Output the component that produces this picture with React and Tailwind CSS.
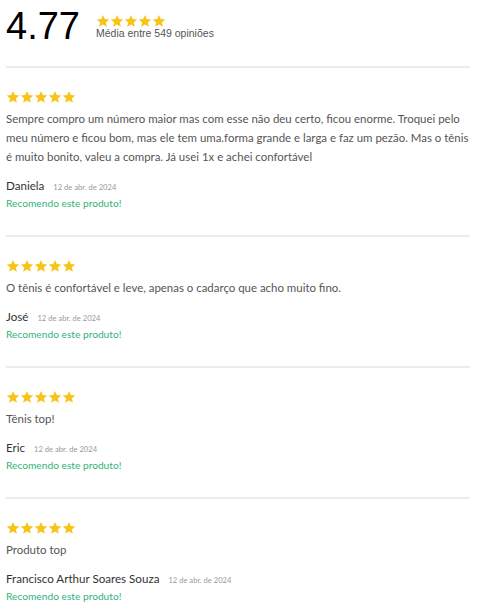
import React from "react";

function Star({ size = 14 }) {
  return (
    <svg width={size} height={size} viewBox="0 0 24 24" className="shrink-0">
      <path
        d="M12 1.5l3.1 7.1 7.6.7-5.8 5.1 1.8 7.5L12 17.9l-6.7 4 1.8-7.5L1.3 9.3l7.6-.7z"
        fill="#f7c51a"
      />
    </svg>
  );
}

function Stars({ size = 14 }) {
  return (
    <div className="flex">
      {[0, 1, 2, 3, 4].map((i) => (
        <Star key={i} size={size} />
      ))}
    </div>
  );
}

const reviews = [
  {
    text: "Sempre compro um número maior mas com esse não deu certo, ficou enorme. Troquei pelo meu número e ficou bom, mas ele tem uma.forma grande e larga e faz um pezão. Mas o tênis é muito bonito, valeu a compra. Já usei 1x e achei confortável",
    name: "Daniela",
  },
  { text: "O tênis é confortável e leve, apenas o cadarço que acho muito fino.", name: "José" },
  { text: "Tênis top!", name: "Eric" },
  { text: "Produto top", name: "Francisco Arthur Soares Souza" },
];

export default function App() {
  return (
    <div className="bg-white w-[500px] h-[611px] overflow-hidden pl-[6px] font-['Lato',sans-serif]">
      <div className="w-[464px]">
        <div className="flex items-start h-[66px] font-['Liberation_Sans',sans-serif]">
          <div className="text-[38px] leading-none text-black mt-[7px]">4.77</div>
          <div className="ml-[16px] mt-[14px] flex flex-col">
            <Stars size={14} />
            <div className="text-[10.5px] leading-[12px] text-[#555] -mt-[1px]">Média entre 549 opiniões</div>
          </div>
        </div>
        {reviews.map((r, i) => (
          <div key={i} className="border-t-[2px] border-[#ececec] pt-[22px] pb-[24px]">
            <Stars size={14} />
            <p className="mt-[5px] text-[11.45px] leading-[19px] text-[#555] w-[469px]">{r.text}</p>
            <div className="mt-[11px] flex items-baseline">
              <span className="text-[11.6px] leading-[18px] text-[#333]">{r.name}</span>
              <span className="ml-[9px] text-[7.6px] text-[#999]">12 de abr. de 2024</span>
            </div>
            <div className="text-[10.2px] leading-[16px] text-[#33b27a]">Recomendo este produto!</div>
          </div>
        ))}
      </div>
    </div>
  );
}
